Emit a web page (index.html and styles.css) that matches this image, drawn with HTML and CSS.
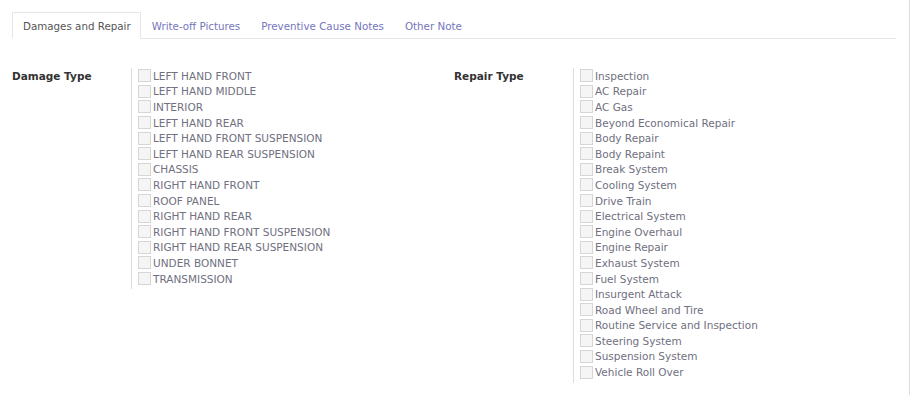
FILE: index.html
```html
<!DOCTYPE html>
<html>
<head>
<meta charset="utf-8">
<link rel="stylesheet" href="styles.css">
</head>
<body>
<div class="frame">
  <div class="content">
    <ul class="tabs">
      <li class="tab active">Damages and Repair</li>
      <li class="tab">Write-off Pictures</li>
      <li class="tab">Preventive Cause Notes</li>
      <li class="tab">Other Note</li>
    </ul>
    <div class="form">
      <div class="group damage">
        <div class="label">Damage Type</div>
        <ul class="checks">
          <li><span class="box"></span>LEFT HAND FRONT</li>
          <li><span class="box"></span>LEFT HAND MIDDLE</li>
          <li><span class="box"></span>INTERIOR</li>
          <li><span class="box"></span>LEFT HAND REAR</li>
          <li><span class="box"></span>LEFT HAND FRONT SUSPENSION</li>
          <li><span class="box"></span>LEFT HAND REAR SUSPENSION</li>
          <li><span class="box"></span>CHASSIS</li>
          <li><span class="box"></span>RIGHT HAND FRONT</li>
          <li><span class="box"></span>ROOF PANEL</li>
          <li><span class="box"></span>RIGHT HAND REAR</li>
          <li><span class="box"></span>RIGHT HAND FRONT SUSPENSION</li>
          <li><span class="box"></span>RIGHT HAND REAR SUSPENSION</li>
          <li><span class="box"></span>UNDER BONNET</li>
          <li><span class="box"></span>TRANSMISSION</li>
        </ul>
      </div>
      <div class="group repair">
        <div class="label">Repair Type</div>
        <ul class="checks">
          <li><span class="box"></span>Inspection</li>
          <li><span class="box"></span>AC Repair</li>
          <li><span class="box"></span>AC Gas</li>
          <li><span class="box"></span>Beyond Economical Repair</li>
          <li><span class="box"></span>Body Repair</li>
          <li><span class="box"></span>Body Repaint</li>
          <li><span class="box"></span>Break System</li>
          <li><span class="box"></span>Cooling System</li>
          <li><span class="box"></span>Drive Train</li>
          <li><span class="box"></span>Electrical System</li>
          <li><span class="box"></span>Engine Overhaul</li>
          <li><span class="box"></span>Engine Repair</li>
          <li><span class="box"></span>Exhaust System</li>
          <li><span class="box"></span>Fuel System</li>
          <li><span class="box"></span>Insurgent Attack</li>
          <li><span class="box"></span>Road Wheel and Tire</li>
          <li><span class="box"></span>Routine Service and Inspection</li>
          <li><span class="box"></span>Steering System</li>
          <li><span class="box"></span>Suspension System</li>
          <li><span class="box"></span>Vehicle Roll Over</li>
        </ul>
      </div>
    </div>
  </div>
</div>
</body>
</html>
```

FILE: styles.css
```css
html, body {
  margin: 0;
  padding: 0;
  background: #fff;
}
body {
  font-family: "DejaVu Sans", Verdana, sans-serif;
  font-size: 10.5px;
  color: #707080;
}
.frame {
  width: 910px;
  height: 395px;
  border-right: 1px solid #dcdce4;
  box-sizing: border-box;
}
.content {
  width: 884px;
  margin-left: 12px;
  padding-top: 12px;
}
.tabs {
  list-style: none;
  margin: 0;
  padding: 0;
  display: flex;
  border-bottom: 1px solid #e6e6e6;
  height: 26px;
}
.tab {
  padding: 3px 10px 0 11px;
  line-height: 23px;
  color: #7676bd;
  font-size: 10.3px;
}
.tab.active {
  border: 1px solid #e6e6e6;
  border-bottom-color: #fff;
  background: #fff;
  color: #555;
  padding: 3px 9px 0 10px;
  line-height: 21px;
  box-sizing: border-box;
  margin-bottom: -1px;
  height: 27px;
}
.form {
  display: flex;
  padding-top: 29px;
}
.group {
  display: flex;
  align-items: flex-start;
}
.damage {
  width: 442px;
}
.label {
  width: 119px;
  font-weight: bold;
  color: #333;
  padding-top: 1px;
  line-height: 15.6px;
}
.checks {
  list-style: none;
  margin: 0;
  padding: 0 0 3px 6px;
  border-left: 1px solid #ddd;
}
.checks li {
  display: flex;
  align-items: center;
  height: 15.6px;
  white-space: nowrap;
}
.box {
  width: 11px;
  height: 11px;
  border: 1px solid #d6d6d6;
  background: #f5f5f5;
  margin-right: 2px;
  flex: none;
}
```
